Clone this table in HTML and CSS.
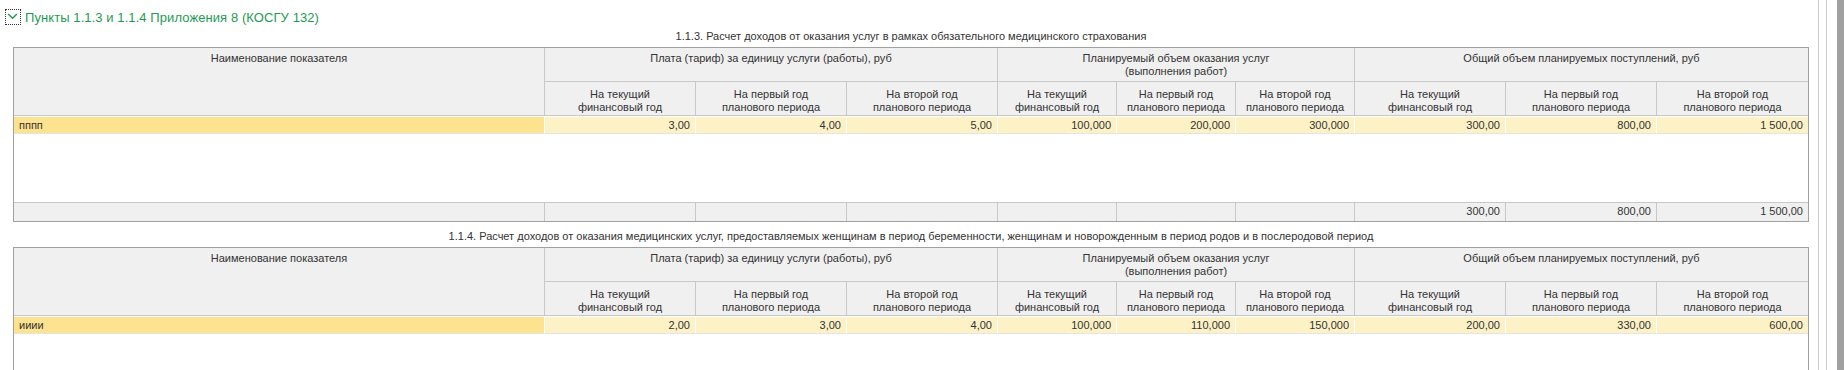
FILE: index.html
```html
<!DOCTYPE html>
<html lang="ru">
<head>
<meta charset="utf-8">
<title>Пункты 1.1.3 и 1.1.4</title>
<link rel="stylesheet" href="styles.css">
</head>
<body>
<div class="page">
  <div class="content">
    <div class="group-title">
      <span class="toggle">
        <svg width="16" height="16" viewBox="0 0 16 16"><path d="M2.5 4.5 L7.5 9.5 L12.5 4.5" fill="none" stroke="#1f9a55" stroke-width="1.6"/></svg>
      </span>
      <span class="group-text">Пункты 1.1.3 и 1.1.4 Приложения 8 (КОСГУ 132)</span>
    </div>

    <div class="caption">1.1.3. Расчет доходов от оказания услуг в рамках обязательного медицинского страхования</div>
    <div class="grid t1">
      <div class="h h-name">Наименование показателя</div>
      <div class="h h-group g1">Плата (тариф) за единицу услуги (работы), руб</div>
      <div class="h h-group g2">Планируемый объем оказания услуг<br>(выполнения работ)</div>
      <div class="h h-group g3 last">Общий объем планируемых поступлений, руб</div>
      <div class="h h-sub">На текущий<br>финансовый год</div>
      <div class="h h-sub">На первый год<br>планового периода</div>
      <div class="h h-sub">На второй год<br>планового периода</div>
      <div class="h h-sub">На текущий<br>финансовый год</div>
      <div class="h h-sub">На первый год<br>планового периода</div>
      <div class="h h-sub">На второй год<br>планового периода</div>
      <div class="h h-sub">На текущий<br>финансовый год</div>
      <div class="h h-sub">На первый год<br>планового периода</div>
      <div class="h h-sub last">На второй год<br>планового периода</div>

      <div class="d d-name">пппп</div>
      <div class="d">3,00</div>
      <div class="d">4,00</div>
      <div class="d">5,00</div>
      <div class="d">100,000</div>
      <div class="d">200,000</div>
      <div class="d">300,000</div>
      <div class="d">300,00</div>
      <div class="d">800,00</div>
      <div class="d last">1 500,00</div>

      <div class="empty"></div>

      <div class="f"></div>
      <div class="f"></div>
      <div class="f"></div>
      <div class="f"></div>
      <div class="f"></div>
      <div class="f"></div>
      <div class="f"></div>
      <div class="f">300,00</div>
      <div class="f">800,00</div>
      <div class="f last">1 500,00</div>
    </div>

    <div class="caption">1.1.4. Расчет доходов от оказания медицинских услуг, предоставляемых женщинам в период беременности, женщинам и новорожденным в период родов и в послеродовой период</div>
    <div class="grid t2">
      <div class="h h-name">Наименование показателя</div>
      <div class="h h-group g1">Плата (тариф) за единицу услуги (работы), руб</div>
      <div class="h h-group g2">Планируемый объем оказания услуг<br>(выполнения работ)</div>
      <div class="h h-group g3 last">Общий объем планируемых поступлений, руб</div>
      <div class="h h-sub">На текущий<br>финансовый год</div>
      <div class="h h-sub">На первый год<br>планового периода</div>
      <div class="h h-sub">На второй год<br>планового периода</div>
      <div class="h h-sub">На текущий<br>финансовый год</div>
      <div class="h h-sub">На первый год<br>планового периода</div>
      <div class="h h-sub">На второй год<br>планового периода</div>
      <div class="h h-sub">На текущий<br>финансовый год</div>
      <div class="h h-sub">На первый год<br>планового периода</div>
      <div class="h h-sub last">На второй год<br>планового периода</div>

      <div class="d d-name">ииии</div>
      <div class="d">2,00</div>
      <div class="d">3,00</div>
      <div class="d">4,00</div>
      <div class="d">100,000</div>
      <div class="d">110,000</div>
      <div class="d">150,000</div>
      <div class="d">200,00</div>
      <div class="d">330,00</div>
      <div class="d last">600,00</div>

      <div class="empty"></div>
    </div>
  </div>
  <div class="scrollbar">
    <div class="sb-track"></div>
    <div class="sb-thumb"></div>
  </div>
</div>
</body>
</html>
```
FILE: styles.css
```css
* { box-sizing: border-box; }
html, body { margin: 0; padding: 0; background: #fff; }
body {
  font-family: "Liberation Sans", Arial, sans-serif;
  font-size: 11px;
  color: #333;
  overflow: hidden;
  height: 370px;
}
.page {
  display: flex;
  height: 370px;
}
.content {
  width: 1818px;
  padding-left: 13px;
}
.group-title {
  display: flex;
  align-items: center;
  margin-top: 9px;
  height: 16px;
  margin-left: -8px;
}
.toggle {
  width: 16px;
  height: 16px;
  border: 1px dotted #333;
  display: flex;
  align-items: center;
  justify-content: center;
}
.toggle svg { display: block; }
.group-text {
  margin-left: 4px;
  font-size: 13px;
  letter-spacing: 0.08px;
  color: #1f9a55;
}
.caption {
  width: 1796px;
  text-align: center;
  height: 13px;
  line-height: 13px;
  margin-top: 5px;
  margin-bottom: 4px;
  white-space: nowrap;
}
.grid + .caption { margin-top: 8px; }

.grid {
  display: grid;
  width: 1796px;
  grid-template-columns: 531px repeat(3, 151px) repeat(3, 119px) repeat(3, 151px);
  grid-template-rows: 34px 34px 18px 68px 19px;
  border: 1px solid #a0a0a0;
}
.t2 { grid-template-rows: 34px 34px 18px 100px; }

.h {
  background: #f0f0f0;
  border-right: 1px solid #c8c8c8;
  border-bottom: 1px solid #c8c8c8;
  text-align: center;
  line-height: 13px;
  padding-top: 4px;
}
.h.last { border-right: none; }
.h-name { grid-row: 1 / 3; }
.g1 { grid-column: 2 / 5; }
.g2 { grid-column: 5 / 8; }
.g3 { grid-column: 8 / 11; }
.h-sub {
  padding-top: 4px;
  display: flex;
  align-items: center;
  justify-content: center;
}
.d {
  background: #fdf1c6;
  border-right: 1px solid #fff;
  border-top: 1px solid #fff;
  border-bottom: 1px solid #e4e4e4;
  text-align: right;
  padding-right: 5px;
  line-height: 16px;
  white-space: nowrap;
}
.d.last { border-right: none; }
.d-name {
  background: #fde28f;
  text-align: left;
  padding-left: 5px;
}
.empty {
  grid-column: 1 / 11;
  background: #fff;
}
.f {
  background: #f0f0f0;
  border-top: 1px solid #c8c8c8;
  border-right: 1px solid #c8c8c8;
  text-align: right;
  padding-right: 5px;
  line-height: 17px;
}
.f.last { border-right: none; }

.scrollbar {
  flex: 1;
  display: flex;
  height: 370px;
}
.sb-track {
  width: 9px;
  border-left: 1px solid #c8c8c8;
  border-right: 1px solid #c8c8c8;
}
.sb-thumb {
  margin-left: 10px;
  width: 7px;
  background: #a0a0a0;
}
```
